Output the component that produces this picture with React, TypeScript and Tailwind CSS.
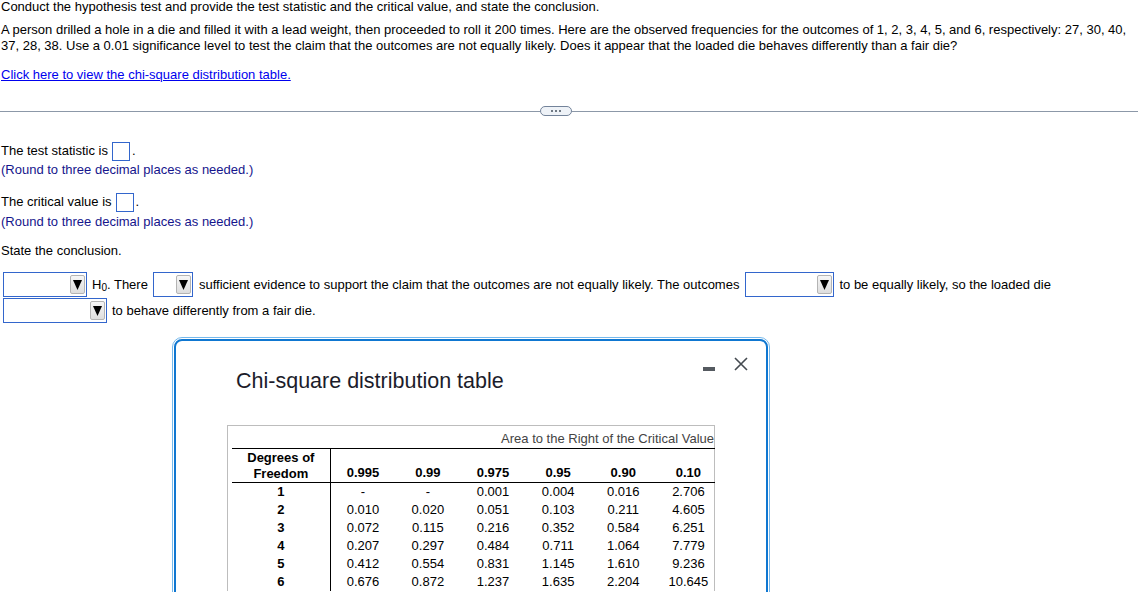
import React from 'react'

const rows: string[][] = [
    ['1', '-', '-', '0.001', '0.004', '0.016', '2.706'],
    ['2', '0.010', '0.020', '0.051', '0.103', '0.211', '4.605'],
    ['3', '0.072', '0.115', '0.216', '0.352', '0.584', '6.251'],
    ['4', '0.207', '0.297', '0.484', '0.711', '1.064', '7.779'],
    ['5', '0.412', '0.554', '0.831', '1.145', '1.610', '9.236'],
    ['6', '0.676', '0.872', '1.237', '1.635', '2.204', '10.645'],
]

const areas = ['0.995', '0.99', '0.975', '0.95', '0.90', '0.10']

function Dropdown({ width }: { width: string }) {
    return (
        <span className={`inline-flex h-[25px] ${width} shrink-0 items-center justify-end border border-[#3366cc] bg-white pr-px`}>
            <span className="flex h-[19px] w-[15px] items-center justify-center rounded-[2px] border border-[#b4b4b4] bg-gradient-to-b from-[#f6f6f6] to-[#dedede]">
                <svg width="9" height="10" viewBox="0 0 9 10">
                    <polygon points="0,0 9,0 4.5,10" fill="#000" />
                </svg>
            </span>
        </span>
    )
}

function AnswerBox() {
    return <span className="ml-[4px] mr-[2px] inline-block h-[19px] w-[18px] border border-[#3366cc] bg-white align-middle"></span>
}

export default function App() {
    return (
        <div className="min-h-[592px] w-[1138px] overflow-hidden bg-white text-[13px] text-black" style={{ fontFamily: '"Liberation Sans", Arial, sans-serif' }}>
            <p className="pl-px leading-[13px]">
                Conduct the hypothesis test and provide the test statistic and the critical value, and state the conclusion.
            </p>
            <p className="mt-[9px] pl-px leading-4">
                A person drilled a hole in a die and filled it with a lead weight, then proceeded to roll it 200 times. Here are the observed frequencies for the outcomes of 1, 2, 3, 4, 5, and 6, respectively: 27, 30, 40,
                <br />
                37, 28, 38. Use a 0.01 significance level to test the claim that the outcomes are not equally likely. Does it appear that the loaded die behaves differently than a fair die?
            </p>
            <p className="mt-[13px] pl-px leading-4">
                <a href="#" className="text-[#0000ee] underline">Click here to view the chi-square distribution table.</a>
            </p>

            {/* Separator */}
            <div className="mt-[23px] flex h-[10px] items-center">
                <div className="h-px w-[540px] bg-[#8c98a8]"></div>
                <div className="flex h-[10px] w-[32px] items-center justify-center gap-[2px] rounded-full border border-[#73839a] bg-[#eef2f7]">
                    <span className="h-[2px] w-[2px] rounded-full bg-[#44505e]"></span>
                    <span className="h-[2px] w-[2px] rounded-full bg-[#44505e]"></span>
                    <span className="h-[2px] w-[2px] rounded-full bg-[#44505e]"></span>
                </div>
                <div className="h-px flex-1 bg-[#8c98a8]"></div>
            </div>

            <div className="mt-[25px] flex h-5 items-center pl-px">
                The test statistic is
                <AnswerBox />.
            </div>
            <p className="mt-px pl-px leading-4 text-[#15158c]">(Round to three decimal places as needed.)</p>

            <div className="mt-[14px] flex h-5 items-center pl-px">
                The critical value is
                <AnswerBox />.
            </div>
            <p className="mt-[2px] pl-px leading-4 text-[#15158c]">(Round to three decimal places as needed.)</p>

            <p className="mt-[13px] pl-px leading-4">State the conclusion.</p>

            <div className="mt-[13px] flex items-center pl-[3px]">
                <Dropdown width="w-[84px]" />
                <span className="ml-[5px]">
                    H<sub className="relative top-[2px] text-[10px]">0</sub>. There
                </span>
                <span className="ml-[5px]"><Dropdown width="w-[40px]" /></span>
                <span className="ml-[6px]">sufficient evidence to support the claim that the outcomes are not equally likely. The outcomes</span>
                <span className="ml-[6px]"><Dropdown width="w-[89px]" /></span>
                <span className="ml-[5px]">to be equally likely, so the loaded die</span>
            </div>
            <div className="mt-px flex items-center pl-[3px]">
                <Dropdown width="w-[104px]" />
                <span className="ml-[5px]">to behave differently from a fair die.</span>
            </div>

            {/* Chi-square modal */}
            <div className="ml-[172px] mt-[14px] h-[300px] w-[598px] rounded-[10px] border border-[#76b9ec] p-px">
                <div className="h-full rounded-[8px] border-2 border-[#0f77d1] bg-white">
                    <div className="flex items-start justify-between pr-[18px]">
                        <h2 className="pl-[60px] pt-[28px] text-[21.5px] leading-6 text-[#1c1c2a]">Chi-square distribution table</h2>
                        <div className="flex items-center gap-[19px] pt-[16px]">
                            <span className="mt-[10px] h-[4px] w-[12px] bg-[#555a60]"></span>
                            <svg width="14" height="14" viewBox="0 0 14 14" className="text-[#444a50]">
                                <path d="M1 1 L13 13 M13 1 L1 13" stroke="currentColor" strokeWidth="1.6" fill="none" />
                            </svg>
                        </div>
                    </div>

                    <div className="ml-[51px] mt-[32px] w-[488px] border border-b-0 border-[#bdbdbd] pl-[4px] text-[13px]">
                        <div className="h-[22px] pt-[5px] text-right leading-[15px] text-[#444]">Area to the Right of the Critical Value</div>
                        <table className="w-[483px] border-collapse">
                            <thead>
                                <tr className="border-y border-black">
                                    <th className="w-[98px] border-r border-black pt-px align-bottom font-bold leading-4">
                                        Degrees of
                                        <br />
                                        Freedom
                                    </th>
                                    {areas.map((a, i) => (
                                        <th key={a} className={`${i === 5 ? 'w-[59px] pl-[6px]' : 'w-[65px]'} pb-px align-bottom font-bold leading-4`}>
                                            {a}
                                        </th>
                                    ))}
                                </tr>
                            </thead>
                            <tbody>
                                {rows.map((r) => (
                                    <tr key={r[0]} className="h-[18px]">
                                        <td className="border-r border-black text-center font-bold leading-[18px]">{r[0]}</td>
                                        {r.slice(1).map((v, i) => (
                                            <td key={i} className={`${i === 5 ? 'pl-[6px]' : ''} text-center leading-[18px]`}>
                                                {v}
                                            </td>
                                        ))}
                                    </tr>
                                ))}
                            </tbody>
                        </table>
                    </div>
                </div>
            </div>
        </div>
    )
}
